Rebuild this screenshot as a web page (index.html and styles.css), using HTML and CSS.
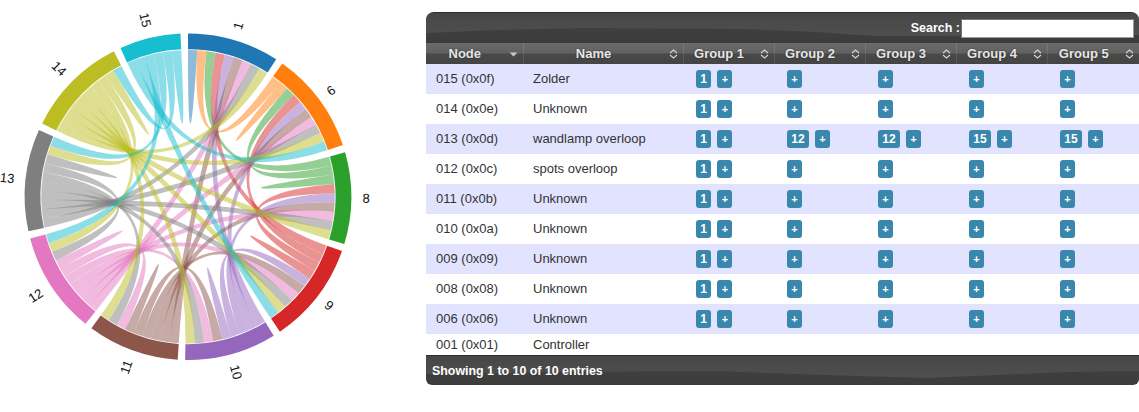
FILE: index.html
```html
<!DOCTYPE html>
<html lang="en">
<head>
<meta charset="utf-8">
<title>Association groups</title>
<link rel="stylesheet" href="styles.css">
</head>
<body>
<div class="page">
  <div class="chart">
    <svg id="chord" class="chord-svg" width="426" height="412" viewBox="0 0 426 412" role="img" aria-label="Chord diagram of node associations"></svg>
  </div>
  <section class="panel">
    <div class="bar bar-top">
      <label class="search">Search :<input class="search-input" type="text"></label>
    </div>
    <table class="grid">
      <colgroup>
        <col class="c-node"><col class="c-name"><col class="c-group"><col class="c-group"><col class="c-group"><col class="c-group"><col>
      </colgroup>
      <thead>
        <tr>
          <th><span class="th-in">Node<svg class="sort" width="9" height="10" viewBox="0 0 9 10"><path d="M.5 3.5h8L4.5 7.5z" fill="#c8c8c8"/></svg></span></th>
          <th><span class="th-in">Name<svg class="sort" width="9" height="10" viewBox="0 0 9 10"><path d="M1 4l3.5-3L8 4M1 6l3.5 3L8 6" fill="none" stroke="#d8d8d8" stroke-width="1.1"/></svg></span></th>
          <th><span class="th-in">Group 1<svg class="sort" width="9" height="10" viewBox="0 0 9 10"><path d="M1 4l3.5-3L8 4M1 6l3.5 3L8 6" fill="none" stroke="#d8d8d8" stroke-width="1.1"/></svg></span></th>
          <th><span class="th-in">Group 2<svg class="sort" width="9" height="10" viewBox="0 0 9 10"><path d="M1 4l3.5-3L8 4M1 6l3.5 3L8 6" fill="none" stroke="#d8d8d8" stroke-width="1.1"/></svg></span></th>
          <th><span class="th-in">Group 3<svg class="sort" width="9" height="10" viewBox="0 0 9 10"><path d="M1 4l3.5-3L8 4M1 6l3.5 3L8 6" fill="none" stroke="#d8d8d8" stroke-width="1.1"/></svg></span></th>
          <th><span class="th-in">Group 4<svg class="sort" width="9" height="10" viewBox="0 0 9 10"><path d="M1 4l3.5-3L8 4M1 6l3.5 3L8 6" fill="none" stroke="#d8d8d8" stroke-width="1.1"/></svg></span></th>
          <th><span class="th-in">Group 5<svg class="sort" width="9" height="10" viewBox="0 0 9 10"><path d="M1 4l3.5-3L8 4M1 6l3.5 3L8 6" fill="none" stroke="#d8d8d8" stroke-width="1.1"/></svg></span></th>
        </tr>
      </thead>
      <tbody>
        <tr class="odd"><td>015 (0x0f)</td><td>Zolder</td><td><span class="tag">1</span><span class="tag add">+</span></td><td><span class="tag add">+</span></td><td><span class="tag add">+</span></td><td><span class="tag add">+</span></td><td><span class="tag add">+</span></td></tr>
        <tr><td>014 (0x0e)</td><td>Unknown</td><td><span class="tag">1</span><span class="tag add">+</span></td><td><span class="tag add">+</span></td><td><span class="tag add">+</span></td><td><span class="tag add">+</span></td><td><span class="tag add">+</span></td></tr>
        <tr class="odd"><td>013 (0x0d)</td><td>wandlamp overloop</td><td><span class="tag">1</span><span class="tag add">+</span></td><td><span class="tag">12</span><span class="tag add">+</span></td><td><span class="tag">12</span><span class="tag add">+</span></td><td><span class="tag">15</span><span class="tag add">+</span></td><td><span class="tag">15</span><span class="tag add">+</span></td></tr>
        <tr><td>012 (0x0c)</td><td>spots overloop</td><td><span class="tag">1</span><span class="tag add">+</span></td><td><span class="tag add">+</span></td><td><span class="tag add">+</span></td><td><span class="tag add">+</span></td><td><span class="tag add">+</span></td></tr>
        <tr class="odd"><td>011 (0x0b)</td><td>Unknown</td><td><span class="tag">1</span><span class="tag add">+</span></td><td><span class="tag add">+</span></td><td><span class="tag add">+</span></td><td><span class="tag add">+</span></td><td><span class="tag add">+</span></td></tr>
        <tr><td>010 (0x0a)</td><td>Unknown</td><td><span class="tag">1</span><span class="tag add">+</span></td><td><span class="tag add">+</span></td><td><span class="tag add">+</span></td><td><span class="tag add">+</span></td><td><span class="tag add">+</span></td></tr>
        <tr class="odd"><td>009 (0x09)</td><td>Unknown</td><td><span class="tag">1</span><span class="tag add">+</span></td><td><span class="tag add">+</span></td><td><span class="tag add">+</span></td><td><span class="tag add">+</span></td><td><span class="tag add">+</span></td></tr>
        <tr><td>008 (0x08)</td><td>Unknown</td><td><span class="tag">1</span><span class="tag add">+</span></td><td><span class="tag add">+</span></td><td><span class="tag add">+</span></td><td><span class="tag add">+</span></td><td><span class="tag add">+</span></td></tr>
        <tr class="odd"><td>006 (0x06)</td><td>Unknown</td><td><span class="tag">1</span><span class="tag add">+</span></td><td><span class="tag add">+</span></td><td><span class="tag add">+</span></td><td><span class="tag add">+</span></td><td><span class="tag add">+</span></td></tr>
        <tr class="short"><td>001 (0x01)</td><td>Controller</td><td></td><td></td><td></td><td></td><td></td></tr>
      </tbody>
    </table>
    <div class="bar bar-bottom">Showing 1 to 10 of 10 entries</div>
  </section>
</div>
<script src="chord.js"></script>
</body>
</html>
```
FILE: styles.css
```css
* { box-sizing: border-box; }
html, body { margin: 0; padding: 0; background: #fff; }
body { font-family: "Liberation Sans", Arial, sans-serif; font-size: 13px; color: #333; }
.page { display: flex; align-items: flex-start; width: 1139px; height: 412px; overflow: hidden; }
.chart { flex: 0 0 426px; height: 412px; }
.chord-svg { display: block; }
.chord-label { font-family: "Liberation Sans", Arial, sans-serif; font-size: 13px; fill: #111; }
.panel { flex: 0 0 713px; margin-top: 12px; }
.bar {
  position: relative; isolation: isolate; overflow: hidden;
  color: #fff; font-weight: bold; font-size: 12.4px;
  background: linear-gradient(#414141, #3c3c3c);
  border-top: 1px solid #2e2e2e;
}
.bar::before {
  content: ""; position: absolute; inset: 0; z-index: -1;
  background: linear-gradient(#474747, #515151);
}
.bar-top::before {
  clip-path: polygon(0 0, 100% 0, 100% 22px, 450px 23px, 390px 19px, 320px 16px, 160px 15px, 70px 17px, 0 20px);
}
.bar-bottom::before {
  clip-path: polygon(0 0, 100% 0, 100% 15px, 640px 16px, 570px 19px, 500px 22px, 400px 19px, 290px 15px, 130px 16px, 0 18px);
}
.bar-top { height: 31px; border-radius: 8px 8px 0 0; display: flex; justify-content: flex-end; align-items: center; padding-right: 5px; }
.bar-bottom { height: 30px; border-radius: 0 0 6px 6px; display: flex; align-items: center; padding-left: 6px; }
.search { font-size: 12.5px; display: flex; align-items: center; gap: 1px; white-space: pre; }
.search-input { width: 173px; height: 19px; margin: 0; padding: 0 2px; background: #fff; border: 1px solid #9a9a9a; border-top-color: #777; border-left-color: #777; }
.grid { width: 713px; table-layout: fixed; border-collapse: collapse; border-spacing: 0; }
.c-node { width: 97px; }
.c-name { width: 160px; }
.c-group { width: 91px; }
.grid th {
  height: 21px; padding: 0; font-size: 13px; font-weight: bold; color: #e6e6e6;
  text-shadow: 0 0 2px rgba(0,0,0,.5);
  background: linear-gradient(#6b6b6b, #616161 48%, #4a4a4a 52%, #444);
  border-left: 1px solid rgba(255,255,255,.1);
}
.grid th:first-child { border-left: 0; }
.th-in { display: block; position: relative; text-align: center; padding-right: 19px; line-height: 21px; }
.sort { position: absolute; right: 5px; top: 6px; }
.grid td { height: 30px; padding: 0 0 0 10px; font-size: 13px; color: #333; white-space: nowrap; vertical-align: middle; }
.grid td:nth-child(-n+2) { padding-bottom: 2px; }
.grid td:nth-child(n+3) { padding-left: 13px; }
.grid .odd td { background: #e2e4ff; }
.grid .short td { height: 21px; padding-bottom: 0; }
.tag {
  display: inline-block; height: 18px; line-height: 18px; padding: 0 4.33px; margin-right: 6px;
  vertical-align: middle; font-size: 12px; font-weight: bold; color: #fff;
  background: #3a87ad; border-radius: 3px; text-align: center;
}
.tag.add { width: 15px; padding: 0; font-size: 11px; }
```
FILE: chord.js
```js
(function () {
  var NS = 'http://www.w3.org/2000/svg';
  var svg = document.getElementById('chord');
  var cx = 188, cy = 196.7;
  var R0 = 147.5, R1 = 163.3, RR = 146.7, LABEL = 174.5;
  var PAD = 2.6, UNIT = 3.63;
  var nodes = ['1', '6', '8', '9', '10', '11', '12', '13', '14', '15'];
  var colors = ['#1f77b4', '#ff7f0e', '#2ca02c', '#d62728', '#9467bd', '#8c564b', '#e377c2', '#7f7f7f', '#bcbd22', '#17becf'];
  var noLink15 = { '1': 1, '8': 1, '10': 1, '11': 1 };

  function linked(a, b) {
    if (a === b) return true;
    if (nodes[a] === '15') return !noLink15[nodes[b]];
    if (nodes[b] === '15') return !noLink15[nodes[a]];
    return true;
  }
  function pt(deg, r) {
    var t = deg * Math.PI / 180;
    return (cx + r * Math.sin(t)).toFixed(2) + ' ' + (cy - r * Math.cos(t)).toFixed(2);
  }
  function add(tag, attrs, parent) {
    var el = document.createElementNS(NS, tag);
    for (var k in attrs) el.setAttribute(k, attrs[k]);
    (parent || svg).appendChild(el);
    return el;
  }

  var seg = {}, angle = 0, groups = [];
  nodes.forEach(function (_, i) {
    var start = angle;
    seg[i] = {};
    nodes.forEach(function (_, j) {
      if (linked(i, j)) { seg[i][j] = [angle, angle + UNIT]; angle += UNIT; }
    });
    groups.push([start, angle]);
    angle += PAD;
  });

  var ribbons = add('g', { 'fill-opacity': '0.5' });
  nodes.forEach(function (_, i) {
    nodes.forEach(function (_, j) {
      if (j < i || !linked(i, j)) return;
      var s = seg[i][j], t = seg[j][i];
      var c = cx + ' ' + cy;
      var arc = 'A' + RR + ' ' + RR + ' 0 0 1 ';
      add('path', {
        d: 'M' + pt(s[0], RR) + arc + pt(s[1], RR) +
           'Q' + c + ' ' + pt(t[0], RR) + arc + pt(t[1], RR) +
           'Q' + c + ' ' + pt(s[0], RR) + 'Z',
        fill: colors[j]
      }, ribbons);
    });
  });

  groups.forEach(function (g, i) {
    add('path', {
      d: 'M' + pt(g[0], R1) + 'A' + R1 + ' ' + R1 + ' 0 0 1 ' + pt(g[1], R1) +
         'L' + pt(g[1], R0) + 'A' + R0 + ' ' + R0 + ' 0 0 0 ' + pt(g[0], R0) + 'Z',
      fill: colors[i]
    });
    var mid = (g[0] + g[1]) / 2;
    var flip = mid > 180;
    var label = add('text', {
      'class': 'chord-label',
      dy: '.35em',
      'text-anchor': flip ? 'end' : 'start',
      transform: 'translate(' + cx + ' ' + cy + ') rotate(' + (mid - 90) + ') translate(' + LABEL + ' 0)' + (flip ? ' rotate(180)' : '')
    });
    label.textContent = nodes[i];
  });
})();
```
